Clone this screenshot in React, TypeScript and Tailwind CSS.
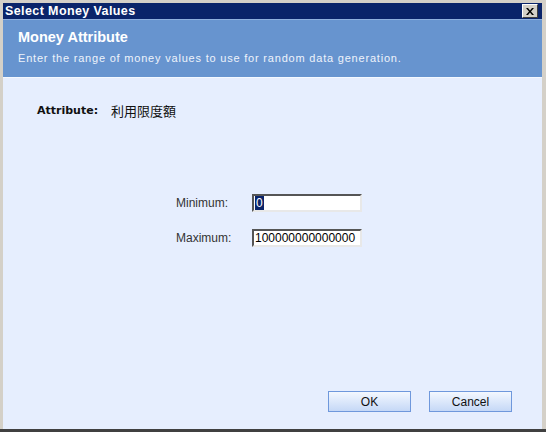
export default function App() {
  const font = "font-['Liberation_Sans',Arial,sans-serif]";
  return (
    <div className={`flex h-[432px] w-[546px] flex-col bg-[#d4d0c8] ${font}`}>
      <div className="flex flex-1 flex-col pl-[3px] pr-[4px] pt-[3px]">
        {/* title bar */}
        <div className="flex h-[16px] items-center justify-between bg-[#0a246a] pl-[2px] pr-[4px]">
          <span className="text-[12.5px] font-bold leading-none tracking-[0.4px] text-white">Select Money Values</span>
          <button className="flex h-[14px] w-[16px] items-center justify-center border border-t-white border-l-white border-r-[#404040] border-b-[#404040] bg-[#d4d0c8]">
            <svg width="8" height="7" viewBox="0 0 8 7">
              <path d="M0 0h2l2 2.5L6 0h2L5 3.5 8 7H6L4 4.5 2 7H0l3-3.5z" fill="#000" />
            </svg>
          </button>
        </div>
        {/* header */}
        <div className="flex h-[58px] flex-col border-t border-[#8fb0de] bg-[#6794cf] pl-[15px] pt-[8px]">
          <div className="text-[14.5px] font-bold leading-[19px] text-white">Money Attribute</div>
          <div className="mt-[4px] text-[11px] leading-[14px] tracking-[0.8px] text-[#eef3fb]">
            Enter the range of money values to use for random data generation.
          </div>
        </div>
        {/* body */}
        <div className="flex flex-1 flex-col border-t border-[#f4f8ff] bg-[#e6eefe]">
          <div className="flex items-center pl-[34px] pt-[25px] leading-[16px] text-[#111]">
            <span className="w-[74px] font-['DejaVu_Sans',sans-serif] text-[11px] font-bold">Attribute:</span>
            <span className="font-['Noto_Sans_CJK_JP',sans-serif] text-[13px]">利用限度額</span>
          </div>
          <div className="mt-[75px] flex flex-col gap-[17px] pl-[173px] text-[12px] text-[#333]">
            <div className="flex items-center">
              <span className="w-[76px]">Minimum:</span>
              <div className="flex h-[18px] w-[110px] items-center border-2 border-t-[#555] border-l-[#555] border-r-[#e8e8e8] border-b-[#e8e8e8] bg-white pl-[1px]">
                <span className="bg-[#0a246a] px-[1px] text-[12px] leading-[14px] text-white">0</span>
              </div>
            </div>
            <div className="flex items-center">
              <span className="w-[76px]">Maximum:</span>
              <div className="flex h-[18px] w-[110px] items-center border-2 border-t-[#555] border-l-[#555] border-r-[#e8e8e8] border-b-[#e8e8e8] bg-white pl-[1px]">
                <span className="text-[12px] leading-[14px] text-black">100000000000000</span>
              </div>
            </div>
          </div>
          <div className="mt-auto flex justify-end gap-[18px] pb-[17px] pr-[30px]">
            <button className="h-[21px] w-[83px] border border-[#6f98dc] bg-gradient-to-b from-[#f4f8ff] to-[#c5d8f6] text-[12px] text-[#111]">
              OK
            </button>
            <button className="h-[21px] w-[83px] border border-[#6f98dc] bg-gradient-to-b from-[#f4f8ff] to-[#c5d8f6] text-[12px] text-[#111]">
              Cancel
            </button>
          </div>
        </div>
      </div>
      <div className="h-[3px] bg-[#404040]" />
    </div>
  );
}
